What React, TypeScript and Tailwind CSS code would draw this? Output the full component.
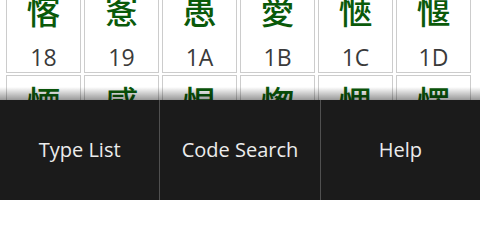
import React from "react";

const rows: { ch: string; code: string }[][] = [
  [
    { ch: "愘", code: "18" },
    { ch: "愙", code: "19" },
    { ch: "愚", code: "1A" },
    { ch: "愛", code: "1B" },
    { ch: "愜", code: "1C" },
    { ch: "愝", code: "1D" },
  ],
  [
    { ch: "愞", code: "1E" },
    { ch: "感", code: "1F" },
    { ch: "愠", code: "20" },
    { ch: "愡", code: "21" },
    { ch: "愢", code: "22" },
    { ch: "愣", code: "23" },
  ],
];

function Cell({ ch, code }: { ch: string; code: string }) {
  return (
    <div className="flex flex-col items-center h-[90px] border border-[#cccccc] bg-white">
      <div className="mt-[9px] h-[34px] leading-[34px] text-[34px] font-medium text-[#0a5a0a] font-['Noto_Sans_CJK_SC','Noto_Sans_CJK_JP',sans-serif]">
        {ch}
      </div>
      <div className="mt-[19px] h-[23px] leading-[23px] text-[23px] text-[#3a3a3a] font-['Open_Sans',sans-serif]">
        {code}
      </div>
    </div>
  );
}

export default function App() {
  const buttons = ["Type List", "Code Search", "Help"];
  return (
    <div className="w-[480px] h-[200px] flex flex-col bg-white overflow-hidden">
      <div className="relative h-[100px] overflow-hidden">
        <div className="grid grid-cols-[repeat(6,75px)] gap-x-[3px] gap-y-[2px] pl-[6px] -mt-[17px]">
          {rows.flat().map((c) => (
            <Cell key={c.code} ch={c.ch} code={c.code} />
          ))}
        </div>
        <div className="absolute inset-x-0 bottom-0 h-[13px] bg-linear-to-b from-transparent to-black/40" />
      </div>
      <div className="flex h-[100px] bg-[#1b1b1b]">
        {buttons.map((b, i) => (
          <div
            key={b}
            className={
              "flex-1 flex items-center justify-center text-[20px] text-[#ececec] font-['Open_Sans',sans-serif] " +
              (i > 0 ? "border-l border-[#505050]" : "")
            }
          >
            {b}
          </div>
        ))}
      </div>
    </div>
  );
}
